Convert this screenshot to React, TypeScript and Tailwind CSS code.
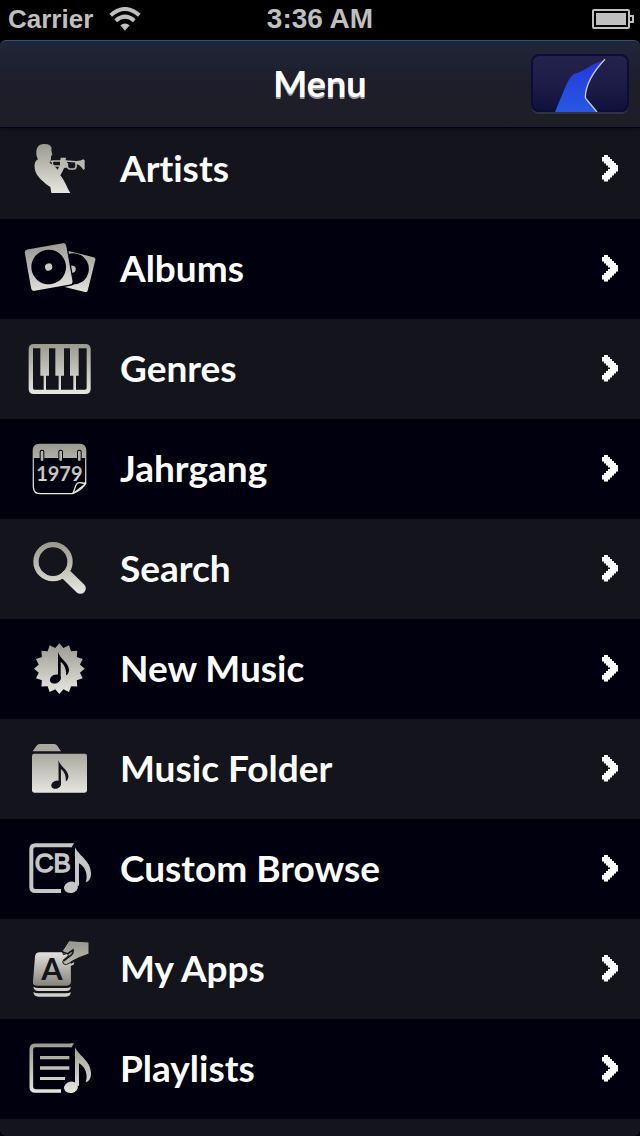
import type { ReactNode } from 'react';

interface MenuItem {
  label: string;
  icon: ReactNode;
}

const SILVER = 'url(#silver)';

const Note = ({ fill }: { fill: string }) => (
  <g fill={fill}>
    <path d="M225 83 C231 106 273 124 273 163 C273 178 268 187 257 190 C265 168 256 143 237 133 V200 H225 Z" />
    <ellipse cx="213" cy="205" rx="21" ry="17" transform="rotate(-12 213 205)" />
  </g>
);

const SmallNote = () => (
  <g>
    <path d="M174 98 C178 118 206 130 207 152 C207 161 203 167 198 169 C200 154 194 136 182 128 V181 H174 Z" />
    <ellipse cx="166" cy="180" rx="17" ry="13" transform="rotate(-25 166 180)" />
  </g>
);

const ArtistIcon = () => (
  <g>
    <path d="M130 75 C145 74 153 79 155 87 L154 94 L157 108 L153 111 L153 120 Q152 125 149 129 L150 133 C159 137 167 144 173 152 L177 143 L184 137 L194 143 L187 158 L181 169 C190 180 200 200 204 210 L211 222 H154 L151 204 C134 192 108 172 105 152 C102 138 104 126 114 121 C108 112 108 99 110 91 Q114 76 130 75 Z" fill={SILVER} />
    <g fill="none" stroke="#b9b9ae">
      <path d="M151 127 L160 127 M158 126 H196 L238 129" strokeWidth="5" />
      <path d="M158 126 Q155 140 164 141 H186" strokeWidth="4" />
      <path d="M202 132 Q200 150 210 150 H222 Q230 149 228 132" strokeWidth="5" />
      <path d="M182 118 H198" strokeWidth="4" />
    </g>
    <path d="M183 118 H197 V124 L201 127 V146 L190 147 L180 141 V124 Z" fill="#b9b9ae" />
    <path d="M226 126 Q242 127 250 121 L254 124 V150 L250 153 Q242 137 226 134 Z" fill="#b9b9ae" />
  </g>
);

const AlbumIcon = () => (
  <g>
    <g transform="rotate(14 236 158)">
      <rect x="184" y="105" width="92" height="108" rx="7" fill={SILVER} />
      <circle cx="218" cy="154" r="47" fill="#00000e" />
      <circle cx="215" cy="156" r="11" fill={SILVER} />
    </g>
    <g transform="rotate(-10 146 144)">
      <rect x="79" y="77" width="134" height="134" rx="11" fill="#00000e" />
      <rect x="83" y="81" width="126" height="126" rx="9" fill={SILVER} />
      <circle cx="146" cy="144" r="52" fill="#00000e" />
      <circle cx="146" cy="144" r="11" fill="#c8c8c0" />
    </g>
  </g>
);

const GenreIcon = () => (
  <g fill={SILVER}>
    <path fillRule="evenodd" d="M102 75 H256 Q272 75 272 91 V209 Q272 225 256 225 H102 Q86 225 86 209 V91 Q86 75 102 75 Z M99 88 V207 Q99 212 104 212 H255 Q260 212 260 207 V88 Z" />
    <path d="M121 85 H147 V170 H138 V215 H131 V170 H121 Z M166 85 H192 V170 H183 V215 H176 V170 H166 Z M210 85 H236 V170 H228 V215 H220 V170 H210 Z" />
  </g>
);

const YearIcon = () => (
  <g>
    <path d="M118 76 H238 Q257 76 257 95 V194 L219 224 H123 Q100 224 100 203 V95 Q100 76 118 76 Z" fill="none" stroke={SILVER} strokeWidth="4" />
    <path d="M120 76 H238 Q257 76 257 95 V117 H100 V95 Q100 76 120 76 Z" fill={SILVER} />
    <path d="M218 223 C227 212 223 193 237 191 C246 189 254 197 257 190 M218 223 Q242 215 256 195" fill="none" stroke="#e4e4dc" strokeWidth="4" />
    {[126, 182, 238].map(x => (
      <g key={x}>
        <rect x={x - 7} y="92" width="14" height="34" rx="6" fill="#00000e" />
        <rect x={x - 4} y="95" width="8" height="31" rx="4" fill="#b4b4a9" />
      </g>
    ))}
    <text x="178" y="187" textAnchor="middle" fontSize="60" className="font-['Lato'] font-bold" fill={SILVER}>1979</text>
  </g>
);

const SearchIcon = () => (
  <g fill="none" stroke={SILVER}>
    <circle cx="159" cy="128" r="51" strokeWidth="16" />
    <path d="M201 169 L241 208" strokeWidth="33" strokeLinecap="round" />
    <path d="M190 158 L204 172" strokeWidth="22" />
  </g>
);

const starPoints = Array.from({ length: 32 }, (_, i) => {
  const r = i % 2 ? 63 : 76;
  const a = (i * Math.PI) / 16 - Math.PI / 2;
  return `${178 + r * Math.cos(a)},${149 + r * Math.sin(a)}`;
}).join(' ');

const NewMusicIcon = () => (
  <g>
    <polygon points={starPoints} fill={SILVER} />
    <g fill="#00000e">
      <SmallNote />
    </g>
  </g>
);

const FolderIcon = () => (
  <g>
    <path d="M98 97 L109 81 Q113 75 119 75 H163 Q168 75 172 80 L183 97 Z" fill="#a9a99e" />
    <rect x="96" y="104" width="165" height="117" rx="7" fill={SILVER} />
    <g fill="#14151c" transform="translate(19 35) scale(0.9)">
      <SmallNote />
    </g>
  </g>
);

const FRAME = 'M214 79 H106 Q94 79 94 91 V204 Q94 216 106 216 H183';

const CustomBrowseIcon = () => (
  <g>
    <path d={FRAME} fill="none" stroke="#c6c6c6" strokeWidth="12" />
    <path d="M212 73 H222 L215 85 H210 Z" fill="#c6c6c6" />
    <text x="104" y="160" fontSize="78" className="font-['Liberation_Sans'] font-normal" fill="#c6c6c6" stroke="#c6c6c6" strokeWidth="4">CB</text>
    <Note fill="#c6c6c6" />
  </g>
);

const AppsIcon = () => (
  <g>
    <path d="M120 100 H197 Q211 100 212 113 L213 187 Q213 200 200 200 H110 Q97 200 99 187 L105 113 Q106 100 120 100 Z" fill="url(#tile)" />
    <path d="M100 203 Q106 207 115 207 H198 Q208 207 212 203 Q212 216 198 216 H115 Q102 216 100 203 Z M100 219 Q106 223 115 223 H198 Q208 223 212 219 Q212 233 198 233 H115 Q102 233 100 219 Z" fill="#d0d0c8" />
    <text x="156" y="182" textAnchor="middle" fontSize="92" className="font-['Lato'] font-bold" fill="#14151c">A</text>
    <path d="M188 94 L207 65 L267 69 V105 L237 116 L219 125 L207 133 Q200 139 191 135 Q184 129 193 120 L205 111 L203 103 L190 107 Z" fill={SILVER} stroke="#14151c" strokeWidth="3" />
    <path d="M187 99 Q204 105 205 103 L219 93 Q221 105 207 113 L190 126" fill="none" stroke="#14151c" strokeWidth="5" />
    <path d="M208 137 L223 129 L221 137 L211 141 Z" fill="#c8c8c0" />
  </g>
);

const PlaylistIcon = () => (
  <g>
    <path d={FRAME} fill="none" stroke={SILVER} strokeWidth="11" />
    <path d="M212 73 H222 L215 85 H210 Z" fill="#a2a297" />
    <path d="M120 111 H208 V121 H120 Z M120 142 H208 V152 H120 Z M120 174 H195 V183 H120 Z" fill={SILVER} />
    <Note fill={SILVER} />
  </g>
);

const items: MenuItem[] = [
  { label: 'Artists', icon: <ArtistIcon /> },
  { label: 'Albums', icon: <AlbumIcon /> },
  { label: 'Genres', icon: <GenreIcon /> },
  { label: 'Jahrgang', icon: <YearIcon /> },
  { label: 'Search', icon: <SearchIcon /> },
  { label: 'New Music', icon: <NewMusicIcon /> },
  { label: 'Music Folder', icon: <FolderIcon /> },
  { label: 'Custom Browse', icon: <CustomBrowseIcon /> },
  { label: 'My Apps', icon: <AppsIcon /> },
  { label: 'Playlists', icon: <PlaylistIcon /> },
];

// stair-stepped arrow, [x, width] of each 2px row
const CHEVRON_ROWS = [
  [4, 4], [2, 8], [2, 10], [4, 10], [6, 10], [8, 10], [10, 8],
  [8, 10], [6, 10], [4, 10], [2, 10], [2, 8], [4, 4],
];

const Chevron = () => (
  <svg className="w-5 h-7 shrink-0" viewBox="0 0 20 28" shapeRendering="crispEdges" aria-hidden="true">
    {CHEVRON_ROWS.map(([x, w], i) => (
      <rect key={i} x={x} y={i * 2 + 1} width={w} height="2" fill="#8d8d93" />
    ))}
    {CHEVRON_ROWS.map(([x, w], i) => (
      <rect key={i} x={x} y={i * 2} width={w} height="2" fill="#fff" />
    ))}
  </svg>
);

function StatusBar() {
  return (
    <div className="grid grid-cols-3 items-center h-10 shrink-0 px-2 pb-0.5 bg-black text-[#bfbfbf] font-['Liberation_Sans',sans-serif] font-bold">
      <div className="flex items-center gap-4">
        <span className="text-[26px] leading-9">Carrier</span>
        <svg className="w-8 h-6" viewBox="0 0 96 72" fill="none" stroke="currentColor">
          <path d="M5 25 Q48 -13 91 25" strokeWidth="12" />
          <path d="M20 41 Q48 17 76 41" strokeWidth="12" />
          <path d="M34 55 Q48 44 62 55 L48 71 Z" fill="currentColor" stroke="none" />
        </svg>
      </div>
      <span className="text-center text-[28px] leading-9">3:36 AM</span>
      <svg className="justify-self-end w-10 h-5 overflow-visible" viewBox="0 0 40 20" fill="none" stroke="currentColor" strokeWidth="2">
        <rect x="1" y="1" width="36" height="18" rx="1" />
        <rect x="4" y="4" width="30" height="12" fill="currentColor" stroke="none" />
        <path d="M38 7 H41 V13 H38" />
      </svg>
    </div>
  );
}

function Header() {
  return (
    <header className="relative z-10 grid grid-cols-[1fr_auto_1fr] items-center h-22 shrink-0 px-[11px] pb-0.5 rounded-t-md border-t border-t-[#36506f] border-b border-b-[#00001c] bg-linear-to-b from-[#1e2739] via-[#1e1d2b] to-[#1e1e26] shadow-[0_1px_4px_#0b0b12]">
      <h1 className="col-start-2 text-[36px] leading-10 font-bold text-white [text-shadow:0_2px_0_#9a9a9a]">Menu</h1>
      <button aria-label="Now playing" className="justify-self-end w-[98px] h-[58px] rounded-lg overflow-hidden bg-linear-to-b from-[#22224a] via-[#1f1d48] to-[#10103c] shadow-[0_2px_0_#33333f,inset_0_0_0_2px_#0c0c38]">
        <svg className="w-full h-full" viewBox="93 162 294 174">
          <path d="M165 336 L195 263 Q208 232 222 222 C260 212 268 194 312 181 C279 216 257 255 256 291 L291 336 Z" fill="url(#tower)" />
          <path d="M315 178 C279 216 257 255 256 291 Q256 296 261 300 L291 336" fill="none" stroke="#c9c9bf" strokeWidth="4" />
        </svg>
      </button>
    </header>
  );
}

export default function App() {
  return (
    <div className="flex flex-col h-screen overflow-hidden bg-black font-['Lato','Open_Sans',sans-serif] [font-variant-ligatures:none]">
      <svg className="absolute w-0 h-0" aria-hidden="true">
        <defs>
          <linearGradient id="silver" gradientUnits="userSpaceOnUse" x1="0" y1="75" x2="0" y2="225">
            <stop offset="0" stopColor="#9b9a8f" />
            <stop offset="1" stopColor="#e8e8e2" />
          </linearGradient>
          <linearGradient id="tile" x1="0" y1="0" x2="0" y2="1">
            <stop offset="0" stopColor="#e2e2dc" />
            <stop offset="1" stopColor="#85857a" />
          </linearGradient>
          <linearGradient id="tower" x1="0" y1="0" x2="0" y2="1">
            <stop offset="0" stopColor="#2438da" />
            <stop offset="1" stopColor="#2858e2" />
          </linearGradient>
        </defs>
      </svg>
      <StatusBar />
      <Header />
      <main className="flex-1 min-h-0 overflow-hidden rounded-b-md bg-[#14151c]">
        <ul className="-mt-[9px]">
          {items.map(item => (
            <li key={item.label} className="odd:bg-[#14151c] even:bg-[#00000e]">
              <button className="flex items-center w-full h-[100px] pr-5 text-left text-white">
                <svg className="w-[120px] h-[100px] shrink-0" viewBox="0 0 360 300" aria-hidden="true">
                  {item.icon}
                </svg>
                <span className="flex-1 pb-0.5 text-[37px] leading-10 font-bold">{item.label}</span>
                <Chevron />
              </button>
            </li>
          ))}
        </ul>
      </main>
    </div>
  );
}
